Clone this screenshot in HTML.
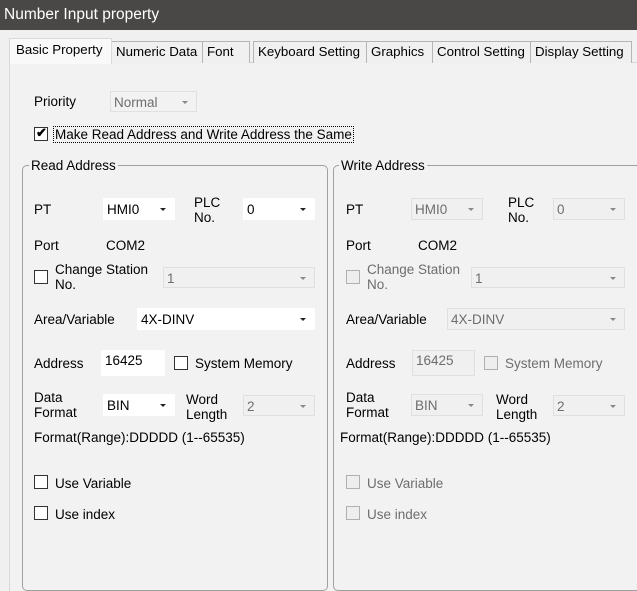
<!DOCTYPE html>
<html><head><style>
*{margin:0;padding:0;box-sizing:border-box}
html,body{width:637px;height:591px;overflow:hidden}
body{background:#f0f0f0;font-family:"Liberation Sans",Arial,sans-serif;font-size:13.5px;color:#000;position:relative}
.a{position:absolute;white-space:nowrap;line-height:15px}
.t{position:absolute;top:0;left:0;width:637px;height:30px;background:#4a4846;color:#fff;font-size:15.5px;padding:6px 0 0 4px}
.tab{position:absolute;top:41px;height:22px;border:1px solid #b5b5b5;border-bottom:none;background:#f0f0f0;padding:2px 0 0 4px;white-space:nowrap;overflow:hidden;font-size:13.3px}
.sel{top:38px;height:26px;background:#f9f9f9;border-color:#d9d9d9;z-index:2;padding:3px 0 0 6px}
.panel{position:absolute;left:9px;top:62px;width:640px;height:540px;border:1px solid #d9d9d9;background:#f2f2f2}
.grp{position:absolute;top:165px;height:426px;border:1px solid #a0a0a0;border-radius:5px}
.leg{position:absolute;background:#f2f2f2;padding:0 2px;line-height:15px}
.box{position:absolute;background:#fff;border:1px solid #fff;padding:3px 0 0 3px;line-height:15px}
.dis{background:#f0f0f0;border-color:#e0e0e0;color:#6d6d6d}
.arr{position:absolute;right:8px;top:9px;width:0;height:0;border-left:3px solid transparent;border-right:3px solid transparent;border-top:3px solid #222}
.dis .arr{border-top-color:#888}
.cb{position:absolute;width:14px;height:14px;border:1px solid #333;background:#fff}
.cbd{border-color:#b0b0b0;background:#eee}
.g{color:#6d6d6d}
</style></head><body>
<div class="t">Number Input property</div>
<div class="panel"></div>
<div class="tab sel" style="left:9px;width:103px">Basic Property</div>
<div class="tab" style="left:111px;width:92px">Numeric Data</div>
<div class="tab" style="left:202px;width:48px">Font</div>
<div class="tab" style="left:253px;width:114px">Keyboard Setting</div>
<div class="tab" style="left:366px;width:67px">Graphics</div>
<div class="tab" style="left:432px;width:99px">Control Setting</div>
<div class="tab" style="left:530px;width:102px">Display Setting</div>

<div class="a" style="left:34px;top:94px">Priority</div>
<div class="box dis" style="left:110px;top:91px;width:87px;height:21px;background:#f2f2f2">Normal<div class="arr"></div></div>
<div class="cb" style="left:34px;top:127px;"><span style="position:absolute;left:1px;top:-3px;font-size:13px;font-weight:bold">✔</span></div>
<div class="a" style="left:53px;top:126px;border:1px dotted #000;padding:0 1px">Make Read Address and Write Address the Same</div>

<div class="grp" style="left:22px;width:306px"></div>
<div class="leg" style="left:29px;top:158px">Read Address</div>
<div class="grp" style="left:333px;width:310px"></div>
<div class="leg" style="left:339px;top:158px">Write Address</div>

<!-- left -->
<div class="a" style="left:34px;top:202px">PT</div>
<div class="box" style="left:103px;top:198px;width:72px;height:22px">HMI0<div class="arr"></div></div>
<div class="a" style="left:194px;top:195px">PLC<br>No.</div>
<div class="box" style="left:243px;top:198px;width:72px;height:22px">0<div class="arr"></div></div>
<div class="a" style="left:34px;top:238px">Port</div>
<div class="a" style="left:106px;top:238px">COM2</div>
<div class="cb" style="left:34px;top:270px"></div>
<div class="a" style="left:55px;top:262px">Change Station<br>No.</div>
<div class="box dis" style="left:163px;top:267px;width:152px;height:21px">1<div class="arr"></div></div>
<div class="a" style="left:34px;top:312px">Area/Variable</div>
<div class="box" style="left:137px;top:308px;width:178px;height:22px">4X-DINV<div class="arr"></div></div>
<div class="a" style="left:34px;top:356px">Address</div>
<div class="box" style="left:101px;top:350px;width:64px;height:26px;padding-top:2px">16425</div>
<div class="cb" style="left:174px;top:356px"></div>
<div class="a" style="left:195px;top:356px">System Memory</div>
<div class="a" style="left:34px;top:390px">Data<br>Format</div>
<div class="box" style="left:103px;top:394px;width:72px;height:22px">BIN<div class="arr"></div></div>
<div class="a" style="left:186px;top:392px">Word<br>Length</div>
<div class="box dis" style="left:243px;top:395px;width:72px;height:21px">2<div class="arr"></div></div>
<div class="a" style="left:34px;top:430px">Format(Range):DDDDD (1--65535)</div>
<div class="cb" style="left:34px;top:475px"></div>
<div class="a" style="left:55px;top:476px">Use Variable</div>
<div class="cb" style="left:34px;top:506px"></div>
<div class="a" style="left:55px;top:507px">Use index</div>

<!-- right -->
<div class="a" style="left:346px;top:202px">PT</div>
<div class="box dis" style="left:411px;top:198px;width:72px;height:22px">HMI0<div class="arr"></div></div>
<div class="a" style="left:508px;top:195px">PLC<br>No.</div>
<div class="box dis" style="left:553px;top:198px;width:72px;height:22px">0<div class="arr"></div></div>
<div class="a" style="left:346px;top:238px">Port</div>
<div class="a" style="left:418px;top:238px">COM2</div>
<div class="cb cbd" style="left:346px;top:270px"></div>
<div class="a g" style="left:367px;top:262px">Change Station<br>No.</div>
<div class="box dis" style="left:471px;top:267px;width:154px;height:21px">1<div class="arr"></div></div>
<div class="a" style="left:346px;top:312px">Area/Variable</div>
<div class="box dis" style="left:447px;top:308px;width:178px;height:22px">4X-DINV<div class="arr"></div></div>
<div class="a" style="left:346px;top:356px">Address</div>
<div class="box dis" style="left:412px;top:350px;width:63px;height:26px;padding-top:2px">16425</div>
<div class="cb cbd" style="left:484px;top:356px"></div>
<div class="a g" style="left:505px;top:356px">System Memory</div>
<div class="a" style="left:346px;top:390px">Data<br>Format</div>
<div class="box dis" style="left:411px;top:394px;width:72px;height:22px">BIN<div class="arr"></div></div>
<div class="a" style="left:496px;top:392px">Word<br>Length</div>
<div class="box dis" style="left:553px;top:395px;width:72px;height:21px">2<div class="arr"></div></div>
<div class="a" style="left:340px;top:430px">Format(Range):DDDDD (1--65535)</div>
<div class="cb cbd" style="left:346px;top:475px"></div>
<div class="a g" style="left:367px;top:476px">Use Variable</div>
<div class="cb cbd" style="left:346px;top:506px"></div>
<div class="a g" style="left:367px;top:507px">Use index</div>
</body></html>
